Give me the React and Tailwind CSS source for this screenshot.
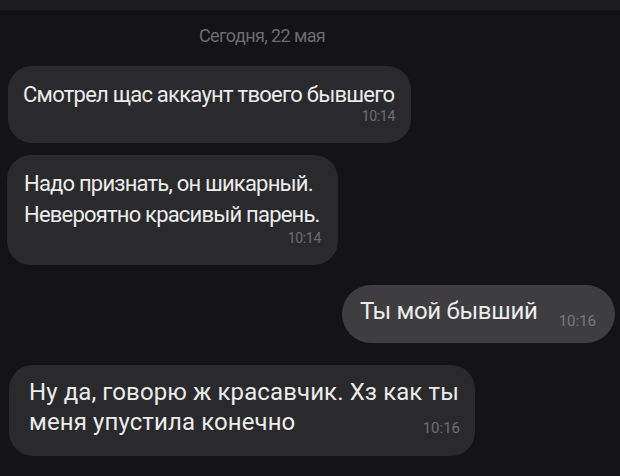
export default function App() {
  return (
    <div className="w-[620px] h-[476px] bg-[#141416] overflow-hidden flex flex-col" style={{ fontFamily: "Roboto, 'Noto Sans', sans-serif" }}>
      <div className="h-[10px] bg-[#1d1d1f] shrink-0" />
      <div className="h-[56px] shrink-0 flex justify-start pl-[199px] pt-[15px] text-[18px] leading-[22px] text-[#6b6b70] tracking-[-0.6px]">
        Сегодня, 22 мая
      </div>
      <div className="flex flex-col pl-[8px] pr-[5px]">
        <div className="w-[403px] h-[77px] rounded-[24px] bg-[#2a2a2d] pl-[15px] pr-[16px] pt-[13px] flex flex-col">
          <div className="text-[22px] leading-[31px] text-[#ececec] tracking-[-0.75px]">Смотрел щас аккаунт твоего бывшего</div>
          <div className="self-end text-[14px] leading-[16px] text-[#6c6c70] -mt-[2px] tracking-[-0.3px]">10:14</div>
        </div>
        <div className="mt-[12px] -ml-[1px] w-[331px] h-[110px] rounded-[24px] bg-[#2a2a2d] pl-[17px] pr-[17px] pt-[13px] flex flex-col">
          <div className="text-[22px] leading-[31px] text-[#ececec] tracking-[-0.8px]">Надо признать, он шикарный.<br />Невероятно красивый парень.</div>
          <div className="self-end text-[14px] leading-[16px] text-[#6c6c70] tracking-[-0.3px]">10:14</div>
        </div>
        <div className="mt-[20px] self-end w-[273px] h-[58px] rounded-[29px] bg-[#3e3e41] pl-[18px] pr-[19px] flex items-center justify-between">
          <div className="text-[24px] leading-[30px] text-[#ececec] tracking-[-0.3px] -mt-[6px]">Ты мой бывший</div>
          <div className="text-[15px] leading-[16px] text-[#77777b] mt-[14px]">10:16</div>
        </div>
        <div className="mt-[22px] ml-[1px] w-[466px] h-[91px] rounded-[24px] bg-[#2a2a2d] pl-[20px] pr-[15px] pt-[12px] flex flex-col">
          <div className="text-[24px] leading-[30px] text-[#ececec] tracking-[0.1px]">Ну да, говорю ж красавчик. Хз как ты</div>
          <div className="flex justify-between items-end">
            <div className="text-[24px] leading-[30px] text-[#ececec] tracking-[0.1px]">меня упустила конечно</div>
            <div className="text-[15px] leading-[16px] text-[#6c6c70] mb-[1px]">10:16</div>
          </div>
        </div>
      </div>
    </div>
  );
}
